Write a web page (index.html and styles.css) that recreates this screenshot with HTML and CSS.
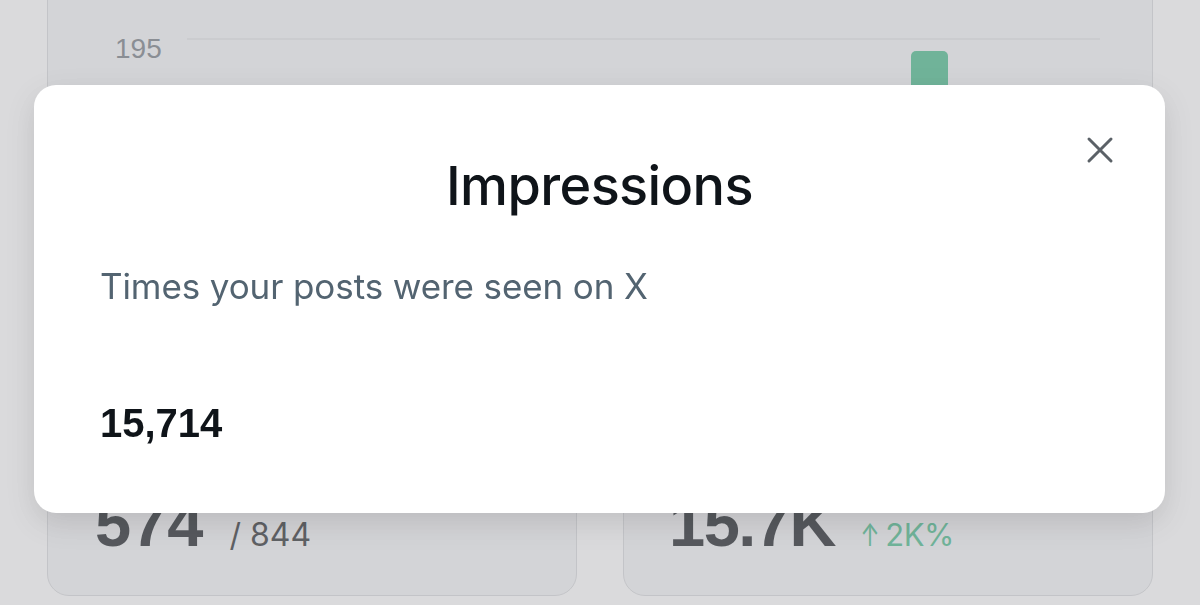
FILE: index.html
```html
<!DOCTYPE html>
<html lang="en">
<head>
    <meta charset="UTF-8">
    <meta name="viewport" content="width=device-width, initial-scale=1.0">
    <title>Analytics - Impressions</title>
    <link rel="stylesheet" href="styles.css">
</head>
<body>
    <main class="dashboard">
        <section class="card chart-card">
            <div class="chart">
                <div class="axis"><span>195</span></div>
                <div class="plot">
                    <div class="bars">
                        <div class="slot"><div class="bar" style="height: 18%"></div></div>
                        <div class="slot"><div class="bar" style="height: 9%"></div></div>
                        <div class="slot"><div class="bar" style="height: 12%"></div></div>
                        <div class="slot"><div class="bar" style="height: 6%"></div></div>
                        <div class="slot"><div class="bar" style="height: 22%"></div></div>
                        <div class="slot"><div class="bar" style="height: 15%"></div></div>
                        <div class="slot"><div class="bar" style="height: 97.25%"></div></div>
                        <div class="slot"><div class="bar" style="height: 40%"></div></div>
                    </div>
                </div>
            </div>
        </section>

        <section class="stats">
            <div class="card stat">
                <div class="stat-value">
                    <span class="big">574</span>
                    <span class="total">/ 844</span>
                </div>
            </div>
            <div class="card stat">
                <div class="stat-value">
                    <span class="big tight">15.7K</span>
                    <span class="delta"><span class="arrow">↑</span>2K%</span>
                </div>
            </div>
        </section>
    </main>

    <!-- modal abierto encima del panel -->
    <div class="backdrop"></div>
    <div class="modal" role="dialog" aria-labelledby="modalTitle">
        <button class="close" aria-label="Close">
            <svg width="30" height="30" viewBox="0 0 30 30">
                <path d="M4 4 L26 26 M26 4 L4 26" />
            </svg>
        </button>
        <h2 id="modalTitle">Impressions</h2>
        <p class="modal-desc">Times your posts were seen on X</p>
        <strong class="modal-value">15,714</strong>
    </div>
</body>
</html>
```

FILE: styles.css
```css
body {
    margin: 0;
    overflow: hidden;
    background-color: #ffffff;
    font-family: 'Inter', 'Liberation Sans', sans-serif;
    color: #0f1419;
}
.dashboard {
    margin-top: -40px;
    padding: 0 47px;
}
.card {
    background-color: #f3f4f6;
    border: 1px solid #d6d8db;
    border-radius: 22px;
}
.chart-card {
    padding: 77px 52px 30px 67px;
}
.chart {
    display: grid;
    grid-template-columns: 72px 1fr;
}
.axis span {
    display: block;
    margin-top: -3px;
    font-family: 'Liberation Sans', sans-serif;
    font-size: 28px;
    line-height: 1;
    color: #6e767d;
}
.plot {
    height: 400px;
    border-top: 2px solid #e4e5e7;
}
.bars {
    display: flex;
    height: 100%;
}
.slot {
    flex: 1;
    display: flex;
    align-items: flex-end;
    justify-content: center;
}
.bar {
    width: 37px;
    margin-left: 2px;
    background-color: #3fb986;
    border-radius: 5px 5px 0 0;
}
.stats {
    display: grid;
    grid-template-columns: 1fr 1fr;
    gap: 46px;
    margin-top: 16px;
}
.stat {
    padding: 3px 30px 39px 47px;
}
.stat-value {
    display: flex;
    align-items: baseline;
    gap: 26px;
}
.big {
    font-family: 'Liberation Sans', sans-serif;
    font-weight: bold;
    font-size: 65px;
    line-height: 1;
    color: #0f1419;
}
.big.tight {
    margin-left: -2px;
    letter-spacing: -1.5px;
}
.total {
    font-size: 32px;
    color: #1f2326;
}
.delta {
    font-size: 31px;
    color: #3fb986;
    letter-spacing: -0.5px;
    margin-left: -4px;
}
.arrow {
    display: inline-block;
    margin-right: 3px;
    transform: scaleX(0.75);
}
.backdrop {
    position: fixed;
    inset: 0;
    background-color: rgba(172, 174, 177, 0.45);
}
.modal {
    position: fixed;
    left: 34px;
    top: 85px;
    width: 1131px;
    height: 428px;
    box-sizing: border-box;
    padding: 69px 66px 0;
    background-color: #ffffff;
    border-radius: 22px;
    box-shadow: 0 10px 30px rgba(0, 0, 0, 0.12);
}
.modal h2 {
    margin: 0;
    text-align: center;
    font-size: 54px;
    font-weight: 500;
    line-height: 1.2;
    letter-spacing: -0.6px;
}
.modal-desc {
    margin: 46px 0 0;
    font-size: 35px;
    line-height: 1.2;
    letter-spacing: -0.1px;
    color: #536471;
}
.modal-value {
    display: block;
    margin-top: 92px;
    font-family: 'Liberation Sans', sans-serif;
    font-size: 40px;
    line-height: 1.2;
}
.close {
    position: absolute;
    top: 45px;
    right: 45px;
    width: 40px;
    height: 40px;
    padding: 0;
    border: none;
    background: none;
    display: flex;
    align-items: center;
    justify-content: center;
    cursor: pointer;
}
.close svg path {
    fill: none;
    stroke: #5b6167;
    stroke-width: 3;
    stroke-linecap: round;
}
```
